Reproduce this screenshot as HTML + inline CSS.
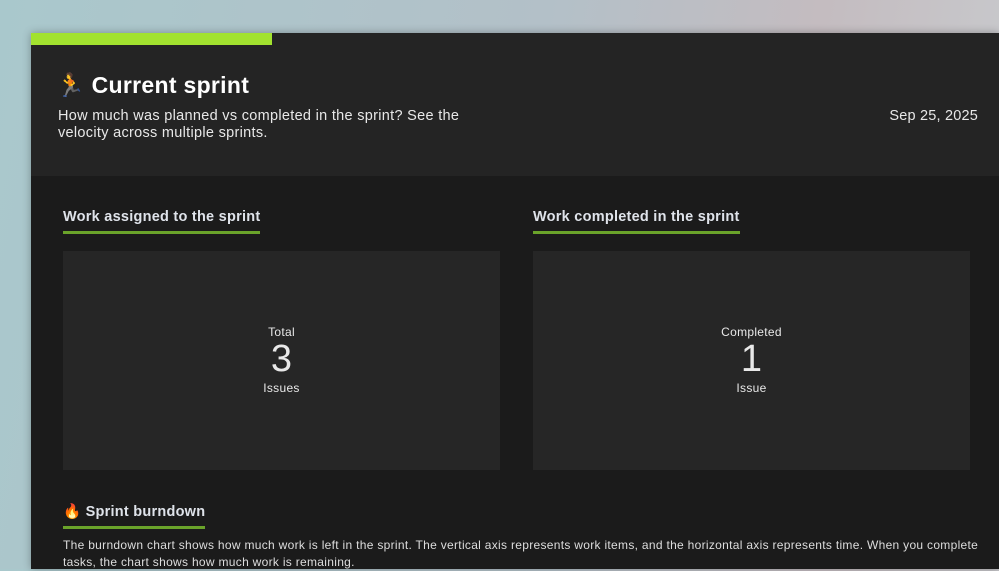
<!DOCTYPE html>
<html><head><style>
*{margin:0;padding:0;box-sizing:border-box}
body{width:999px;height:569px;overflow:hidden;font-family:"Liberation Sans",sans-serif;background:linear-gradient(100deg,#a9c8cc 0%,#b3c0c8 50%,#c4bcc0 75%,#c9cdd0 100%);position:relative}
.panel{position:absolute;left:31px;top:33px;width:968px;height:536px;background:#1b1b1b;box-shadow:0 0 8px rgba(0,0,0,.3)}
.head{height:143px;background:#242424;position:relative}
.bar{position:absolute;left:0;top:0;width:241px;height:12px;background:#a2e22f}
h1{position:absolute;left:25px;top:39px;font-size:23px;color:#fff;font-weight:bold;letter-spacing:.3px}
.desc{position:absolute;left:27px;top:75px;width:430px;font-size:14.5px;line-height:17px;color:#e8e8e8;letter-spacing:.3px}
.date{position:absolute;right:21px;top:75px;font-size:14.5px;color:#e8e8e8;letter-spacing:.2px}
.st{position:absolute;font-size:14.5px;font-weight:bold;color:#dfe3ea;padding-bottom:6px;border-bottom:3px solid #6aa32a;letter-spacing:.25px}
.card{position:absolute;top:218px;width:437px;height:219px;background:#262626;text-align:center;color:#e8e8e8}
.card .l{margin-top:74px;font-size:12px;letter-spacing:.3px}
.card .n{font-size:38px;line-height:40px;font-weight:300}
.card .u{font-size:12px;margin-top:2px;letter-spacing:.3px}
.p{position:absolute;left:32px;top:504px;width:920px;font-size:12px;line-height:17px;color:#ddd;letter-spacing:.3px}
</style></head><body>
<div class="panel">
<div class="head"><div class="bar"></div>
<h1>🏃 Current sprint</h1>
<div class="desc">How much was planned vs completed in the sprint? See the velocity across multiple sprints.</div>
<div class="date">Sep 25, 2025</div></div>
<div class="st" style="left:32px;top:176px">Work assigned to the sprint</div>
<div class="st" style="left:502px;top:176px">Work completed in the sprint</div>
<div class="card" style="left:32px"><div class="l">Total</div><div class="n">3</div><div class="u">Issues</div></div>
<div class="card" style="left:502px"><div class="l">Completed</div><div class="n">1</div><div class="u">Issue</div></div>
<div class="st" style="left:32px;top:470px">🔥 Sprint burndown</div>
<div class="p">The burndown chart shows how much work is left in the sprint. The vertical axis represents work items, and the horizontal axis represents time. When you complete tasks, the chart shows how much work is remaining.</div>
</div>
</body></html>
